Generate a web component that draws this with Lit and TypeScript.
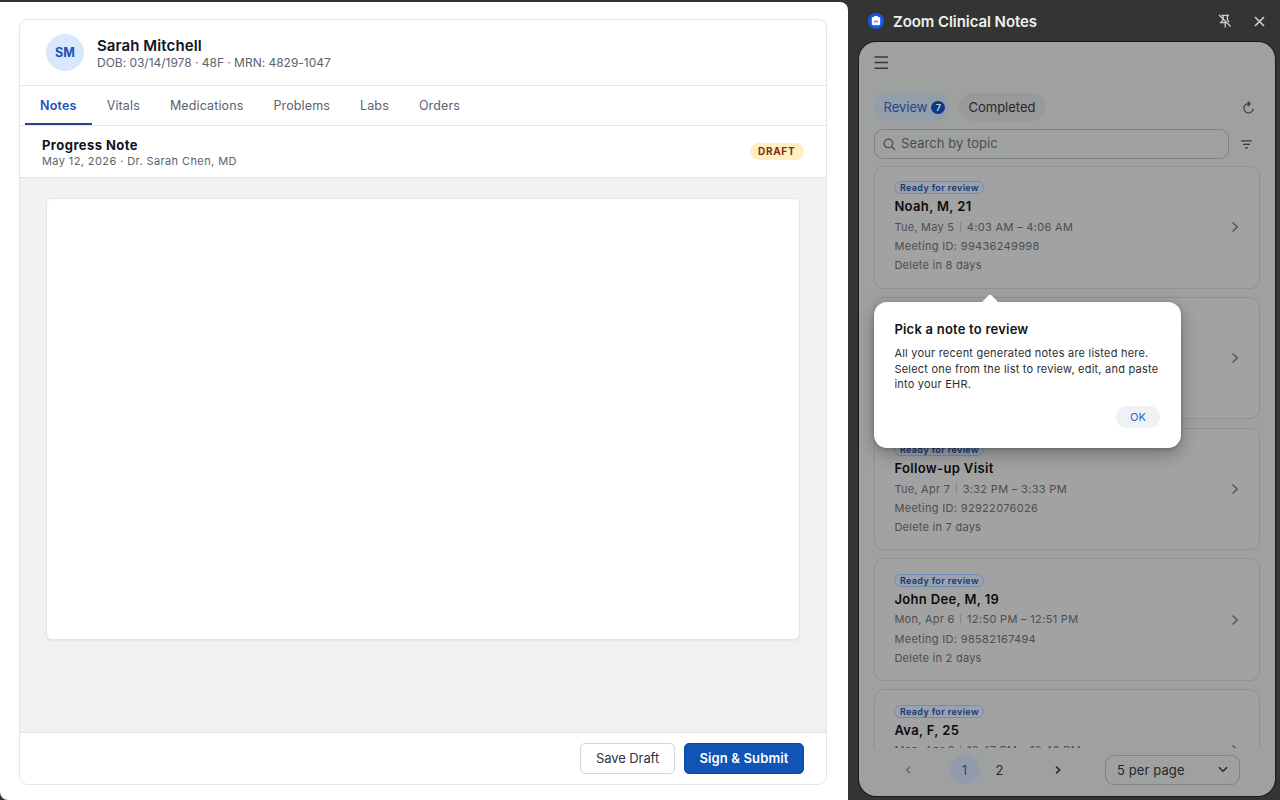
import { LitElement, html, css, svg, nothing } from "lit";
import { customElement, property } from "lit/decorators.js";
import { classMap } from "lit/directives/class-map.js";

interface Note {
  title: string;
  day: string;
  time: string;
  meeting: string;
  expiry: string;
}

const NOTES: Note[] = [
  { title: "Noah, M, 21", day: "Tue, May 5", time: "4:03 AM – 4:06 AM", meeting: "99436249998", expiry: "8" },
  { title: "", day: "", time: "", meeting: "", expiry: "" },
  { title: "Follow-up Visit", day: "Tue, Apr 7", time: "3:32 PM – 3:33 PM", meeting: "92922076026", expiry: "7" },
  { title: "John Dee, M, 19", day: "Mon, Apr 6", time: "12:50 PM – 12:51 PM", meeting: "98582167494", expiry: "2" },
  { title: "Ava, F, 25", day: "Mon, Apr 6", time: "12:47 PM – 12:48 PM", meeting: "", expiry: "" },
];

const TABS = ["Notes", "Vitals", "Medications", "Problems", "Labs", "Orders"];

const stroke = (w: number, h: number, d: string, width = 1.3) => html`
  <svg width=${w} height=${h} viewBox="0 0 ${w} ${h}" fill="none" stroke="currentColor" stroke-width=${width}>
    ${svg`<path d=${d}></path>`}
  </svg>`;

@customElement("ehr-chart")
class EhrChart extends LitElement {
  static styles = css`
    :host { display: block; box-sizing: border-box; width: 848px; height: 798px; margin-top: 2px; padding: 17px 21px 15px 19px; background: #fff; border-radius: 0 8px 0 8px; }
    .card { box-sizing: border-box; display: flex; flex-direction: column; width: 808px; height: 766px; border: 1px solid #e5e6e8; border-radius: 9px; overflow: hidden; }
    .patient { display: flex; align-items: center; gap: 13px; height: 65px; padding-left: 26px; border-bottom: 1px solid #e2e3e6; }
    .avatar { display: grid; place-items: center; width: 38px; height: 37px; border-radius: 50%; background: #d9e7fd; color: #1a51b8; font-size: 12.5px; font-weight: 700; letter-spacing: .2px; }
    .name { font-size: 15px; line-height: 17px; font-weight: 600; letter-spacing: .1px; color: #10151f; margin-top: 2px; }
    .meta { font-size: 12px; line-height: 16px; letter-spacing: -.02px; color: #5c6270; margin-top: 1px; }
    .tabs { display: flex; height: 39px; padding-left: 5px; border-bottom: 1px solid #e2e3e6; }
    .tab { box-sizing: border-box; height: 39px; padding: 0 15px; line-height: 39px; font-size: 12.5px; letter-spacing: .13px; color: #5c6270; border-bottom: 2px solid transparent; }
    .tab.on { letter-spacing: .2px; color: #1a51b8; font-weight: 600; border-bottom-color: #2a3f94; }
    .sub { display: flex; align-items: center; justify-content: space-between; height: 51px; padding: 0 22px; border-bottom: 1px solid #dfe1e4; }
    .title { font-size: 13px; line-height: 16px; font-weight: 700; letter-spacing: .45px; color: #10151f; margin-top: 2px; }
    .author { font-size: 11px; line-height: 16px; letter-spacing: .4px; color: #5c6270; }
    .draft { box-sizing: border-box; width: 54px; height: 17px; line-height: 17px; padding-left: 8px; border-radius: 9px; background: #fdefc3; color: #7f2f12; font-size: 10px; font-weight: 700; letter-spacing: .7px; }
    .body { flex: 1; padding: 20px 26px; background: #eff1f3; }
    .page { box-sizing: border-box; height: 442px; background: #fff; border: 1px solid #e2e4e7; border-radius: 6px; box-shadow: 0 1px 1px rgba(0,0,0,.05); }
    .foot { display: flex; justify-content: flex-end; align-items: center; gap: 9px; height: 51px; padding-right: 22px; border-top: 1px solid #dfe1e4; }
    .btn { box-sizing: border-box; height: 31px; line-height: 29px; border: 1px solid #d3d6da; border-radius: 5px; font-size: 13px; text-align: center; color: #2d3440; width: 95px; letter-spacing: -.08px; }
    .btn.primary { width: 120px; background: #1055b5; border-color: #0a46a4; color: #fff; font-weight: 600; letter-spacing: .13px; }
  `;
  render() {
    return html`
      <div class="card">
        <div class="patient">
          <div class="avatar">SM</div>
          <div>
            <div class="name">Sarah Mitchell</div>
            <div class="meta">DOB: 03/14/1978 · 48F · MRN: 4829-1047</div>
          </div>
        </div>
        <div class="tabs">${TABS.map((t, i) => html`<div class=${classMap({ tab: true, on: i === 0 })}>${t}</div>`)}</div>
        <div class="sub">
          <div>
            <div class="title">Progress Note</div>
            <div class="author">May 12, 2026 · Dr. Sarah Chen, MD</div>
          </div>
          <div class="draft">DRAFT</div>
        </div>
        <div class="body"><div class="page"></div></div>
        <div class="foot">
          <div class="btn">Save Draft</div>
          <div class="btn primary">Sign &amp; Submit</div>
        </div>
      </div>`;
  }
}

@customElement("note-card")
class NoteCard extends LitElement {
  @property({ attribute: false }) note!: Note;
  static styles = css`
    :host { box-sizing: border-box; display: flex; align-items: center; justify-content: space-between; flex: none; height: 122.5px; padding: 0 20px 0 19.4px; border: 1.5px solid #8f9294; border-radius: 10px; background: #a2a2a2; }
    .info { height: 91.6px; }
    .badge { box-sizing: border-box; width: 90px; height: 13px; line-height: 11px; border: 1px solid #6f8cb5; border-radius: 7px; background: #98a2b1; color: #1c3568; text-align: center; font-size: 9px; font-weight: 600; letter-spacing: .36px; white-space: nowrap; }
    .title { height: 16px; margin-top: 4px; line-height: 16px; font-size: 13px; font-weight: 600; letter-spacing: .35px; color: #0c0c0d; }
    .line { display: flex; align-items: center; height: 19.2px; font-size: 11px; letter-spacing: .25px; color: #4c4e51; }
    .wide { letter-spacing: .32px; }
    .when { margin-top: 3px; }
    .bar { width: 1px; height: 11px; margin: 0 6px 0 5.5px; background: #85878a; }
    svg { color: #4e5053; }
  `;
  render() {
    const n = this.note;
    return html`
      <div class="info">
        ${n.title
          ? html`
              <div class="badge">Ready for review</div>
              <div class="title">${n.title}</div>
              <div class="line when">${n.day}<span class="bar"></span><span class="wide">${n.time}</span></div>
              ${n.meeting
                ? html`<div class="line wide">Meeting ID: ${n.meeting}</div>
                    <div class="line">Delete in ${n.expiry} days</div>`
                : nothing}
            `
          : nothing}
      </div>
      ${stroke(9, 12, "M2.5 1.5 7.3 6 2.5 10.5")}`;
  }
}

@customElement("clinical-notes")
class ClinicalNotes extends LitElement {
  static styles = css`
    :host { display: block; width: 432px; height: 800px; }
    .bar { display: flex; align-items: center; height: 42px; padding: 0 15px 0 20px; color: #efefef; }
    .logo { display: block; }
    .app { flex: 1; margin-left: 9px; font-size: 15px; font-weight: 600; letter-spacing: -.07px; }
    .pin { margin-right: 22px; }
    .bar svg { display: block; color: #cfcfcf; }
    .panel { box-sizing: border-box; display: flex; flex-direction: column; width: 416.5px; height: 754px; margin-left: 10.5px; padding: 0 15px 0 15.5px; border-radius: 17px; background: #9fa1a0; box-shadow: 0 0 0 1px #191919; overflow: hidden; color: #3a3b3d; }
    .menu { height: 51px; padding: 14px 0 0; box-sizing: border-box; }
    .menu svg { display: block; }
    .filters { display: flex; align-items: center; gap: 9px; height: 28px; font-size: 13px; }
    .pill { box-sizing: border-box; display: flex; align-items: center; justify-content: center; height: 28px; border-radius: 14px; background: #989999; color: #27282a; width: 86px; }
    .pill.on { width: 76px; gap: 4px; padding-left: 5px; background: #949daa; color: #234685; }
    .count { display: grid; place-items: center; width: 14px; height: 13px; border-radius: 7px; background: #0b3a85; color: #bcc6d6; font-size: 9px; font-weight: 700; }
    .refresh { margin-left: auto; margin-right: 5px; }
    .search { display: flex; align-items: center; height: 30px; margin-top: 8px; }
    .field { box-sizing: border-box; display: flex; align-items: center; gap: 5px; width: 355px; height: 30px; padding: 0 0 2px 8px; border: 1.5px solid #7e8086; border-radius: 9px; font-size: 13px; letter-spacing: .05px; color: #4b4d51; }
    .field svg { margin-top: 2px; }
    .sort { margin-left: 11.5px; }
    .list { display: flex; flex-direction: column; gap: 8.3px; height: 582px; margin-top: 7px; overflow: hidden; }
    .pager { display: flex; align-items: center; height: 43px; font-size: 13px; color: #27282a; }
    .pager svg, .filters svg, .field svg, .sort svg { display: block; }
    .prev { margin-left: 30.5px; color: #626466; }
    .num { display: grid; place-items: center; width: 30px; height: 29px; border-radius: 50%; }
    .num.on { margin-left: 39px; background: #929ba9; color: #214a91; }
    .num.two { margin-left: 5px; }
    .next { margin-left: 40px; }
    .select { box-sizing: border-box; display: flex; align-items: center; justify-content: space-between; width: 135px; height: 30px; margin-left: 44.5px; padding: 0 11px 0 11px; border: 1.5px solid #7e8086; border-radius: 9px; letter-spacing: .1px; }
  `;
  render() {
    return html`
      <div class="bar">
        <svg class="logo" width="16" height="16" viewBox="0 0 16 16">
          <circle cx="8" cy="8" r="8" fill="#1457f0"></circle>
          <rect x="3.8" y="4" width="8.4" height="8.2" rx="1.4" fill="#fff"></rect>
          <rect x="6" y="3" width="4" height="2" rx=".7" fill="#fff"></rect>
          <path d="M5.8 9h1l.8-1.5L8.8 9.4 9.4 8.6h.9" stroke="#1457f0" stroke-width=".9" fill="none"></path>
        </svg>
        <div class="app">Zoom Clinical Notes</div>
        <svg class="pin" width="14" height="14" viewBox="0 0 14 14" fill="none" stroke="currentColor" stroke-width="1.3">
          <path d="M1 1 12.7 12.5M3.5 1.4H11M5.2 1.5V6L2.8 8.6H8.4M9.4 1.5V6L11 8M7.2 8.6V13.5"></path>
        </svg>
        ${stroke(11, 11, "M1 1 10 10M10 1 1 10", 1.6)}
      </div>
      <div class="panel">
        <div class="menu">${stroke(15, 14, "M.5 1H14M.5 6.5H14M.5 12.2H14", 1.5)}</div>
        <div class="filters">
          <div class="pill on">Review <span class="count">7</span></div>
          <div class="pill">Completed</div>
          <svg class="refresh" width="13" height="13" viewBox="0 0 13 13" fill="none" stroke="currentColor" stroke-width="1.2">
            <path d="M3.6 3.6A4.7 4.7 0 1 0 11.2 7.4M3.4 3.6Q5 2.4 7.4 3M5.8.5 8 3 5.6 5.2"></path>
          </svg>
        </div>
        <div class="search">
          <div class="field">
            <svg width="13" height="13" viewBox="0 0 13 13" fill="none" stroke="currentColor" stroke-width="1.3">
              <circle cx="5.4" cy="5.4" r="4.3"></circle><path d="M8.5 8.5 12 12"></path>
            </svg>
            Search by topic
          </div>
          <div class="sort">${stroke(11, 9, "M0 .8H11M2 4.3H9M4 7.8H7", 1.2)}</div>
        </div>
        <div class="list">${NOTES.map((n) => html`<note-card .note=${n}></note-card>`)}</div>
        <div class="pager">
          <span class="prev">${stroke(6, 8, "M5 .8 1.5 4 5 7.2", 1.3)}</span>
          <span class="num on">1</span>
          <span class="num two">2</span>
          <span class="next">${stroke(6, 8, "M1 .6 4.7 4 1 7.4", 1.5)}</span>
          <div class="select">5 per page ${stroke(10, 7, "M1 1.2 5 5.3 9 1.2", 1.5)}</div>
        </div>
      </div>`;
  }
}

@customElement("coach-mark")
class CoachMark extends LitElement {
  static styles = css`
    :host { box-sizing: border-box; display: block; width: 307px; height: 146px; padding: 19px 21px 19px 20.4px; border-radius: 13px; background: #fff; box-shadow: 0 6px 18px rgba(0,0,0,.28), 0 1px 4px rgba(0,0,0,.2); }
    .tip { position: absolute; left: 107px; top: -8px; display: block; }
    .title { font-size: 13px; line-height: 16px; font-weight: 600; letter-spacing: .22px; color: #131416; }
    .text { margin-top: 9px; font-size: 11px; line-height: 15.5px; letter-spacing: .22px; color: #2c2e31; white-space: nowrap; }
    .ok { width: 44px; height: 22px; margin: 13px 0 0 auto; line-height: 22px; border-radius: 11px; background: #eff1f5; color: #2368d8; text-align: center; font-size: 11px; }
  `;
  render() {
    return html`
      <svg class="tip" width="18" height="9" viewBox="0 0 18 9"><path d="M0 9 7.4 1.6Q9 0 10.6 1.6L18 9Z" fill="#fff"></path></svg>
      <div class="title">Pick a note to review</div>
      <div class="text">
        All your recent generated notes are listed here.<br />Select one from the list to review, edit, and paste<br />into your EHR.
      </div>
      <div class="ok">OK</div>`;
  }
}

@customElement("app-root")
class AppRoot extends LitElement {
  static styles = css`
    :host { position: relative; display: flex; width: 1280px; height: 800px; overflow: hidden; background: #343434; font-family: Inter, "Liberation Sans", sans-serif; }
    coach-mark { position: absolute; left: 874px; top: 302px; }
  `;
  render() {
    return html`<ehr-chart></ehr-chart><clinical-notes></clinical-notes><coach-mark></coach-mark>`;
  }
}
